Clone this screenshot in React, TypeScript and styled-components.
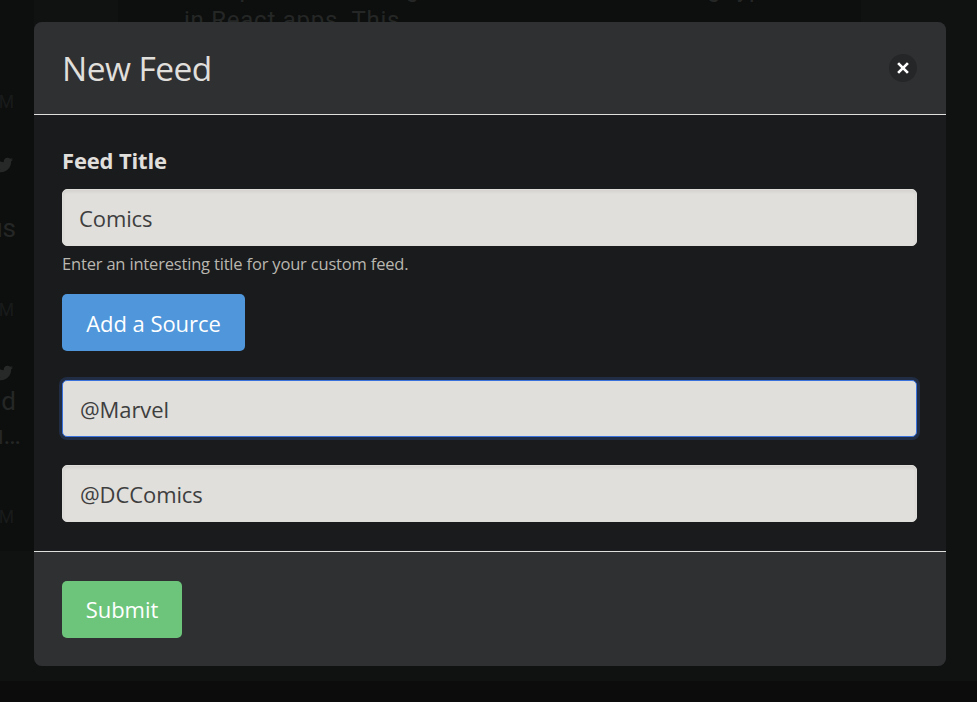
import React from 'react';
import styled, { createGlobalStyle } from 'styled-components';

const GlobalStyle = createGlobalStyle`
  *, *::before, *::after { box-sizing: border-box; }
  html, body { margin: 0; height: 100%; overflow: hidden; background: #101211; }
  body { font-family: "Open Sans", "Noto Sans", sans-serif; }
`;

const Page = styled.div`
  position: relative;
  width: 977px;
  height: 702px;
  overflow: hidden;
  display: flex;
  flex-direction: column;
  background: #101211;
  color: #252726;
  font-family: Roboto, sans-serif;
`;

const Columns = styled.div`
  flex: 1;
  min-height: 0;
  display: flex;
  align-items: flex-start;
`;

const Sidebar = styled.aside`
  width: 34px;
  height: 551px;
  padding-top: 93px;
  background: #0d0f0e;
  display: flex;
  flex-direction: column;
`;

const Tweet = styled.article<{ $height: number }>`
  height: ${(p) => p.$height}px;
  flex: none;
`;

const TweetTime = styled.div`
  width: 14px;
  height: 18px;
  display: flex;
  justify-content: flex-end;
  font-size: 17.5px;
  line-height: 18px;
  color: #191b1b;
`;

const BirdIcon = styled.svg`
  display: block;
  width: 18px;
  height: 18px;
  margin: 45px 0 0 -5px;
  fill: #272929;
`;

const TweetText = styled.div<{ $gap: number; $right: number }>`
  margin-top: ${(p) => p.$gap}px;
  width: ${(p) => p.$right}px;
  height: 30px;
  display: flex;
  justify-content: flex-end;
  font-size: 26px;
  line-height: 30px;
  white-space: nowrap;
`;

const Article = styled.main`
  margin-left: 84px;
  width: 743px;
  height: 660px;
  background: #0d0f0e;
  padding-left: 66px;
`;

const ArticleText = styled.p`
  margin: -26px 0 0;
  font-size: 24px;
  line-height: 31px;
  letter-spacing: 0.75px;
  white-space: nowrap;
`;

const PageFooter = styled.footer`
  height: 21px;
  background: #0c0c0c;
`;

const Modal = styled.form`
  position: absolute;
  left: 34px;
  top: 22px;
  width: 912px;
  height: 644px;
  display: flex;
  flex-direction: column;
  border-radius: 8px;
  overflow: hidden;
  background: #1a1b1d;
  color: #e0dfdb;
  font-family: "Open Sans", "Noto Sans", sans-serif;
`;

const ModalHeader = styled.header`
  height: 93px;
  flex: none;
  padding: 0 29px 1px 28px;
  display: flex;
  align-items: center;
  justify-content: space-between;
  background: #2f3032;
  border-bottom: 1px solid #dfdfdd;
`;

const Title = styled.h1`
  margin: 1px 0 0;
  font-size: 33.5px;
  line-height: 40px;
  font-weight: 400;
  letter-spacing: -0.55px;
`;

const CloseButton = styled.button`
  width: 28px;
  height: 28px;
  padding: 0;
  border: 0;
  border-radius: 50%;
  background: #252628;
  display: grid;
  place-items: center;
`;

const ModalBody = styled.section`
  flex: 1;
  padding: 28px 29px 0 28px;
  display: flex;
  flex-direction: column;
  align-items: flex-start;
`;

const Label = styled.label`
  height: 34px;
  margin-bottom: 12px;
  font-size: 22px;
  line-height: 34px;
  font-weight: 700;
  letter-spacing: -0.15px;
`;

const Input = styled.input<{ $active?: boolean; $gap?: number; $inset?: number }>`
  width: 100%;
  height: 57px;
  flex: none;
  margin: ${(p) => p.$gap ?? 0}px 0 0;
  padding: 1px 16px 0 ${(p) => p.$inset ?? 16}px;
  border: 1px solid ${(p) => (p.$active ? '#3971dc' : '#dfdedb')};
  border-radius: 5px;
  outline: none;
  background: #e0dfdb;
  color: #3e3e3f;
  box-shadow: ${(p) => (p.$active ? '0 0 0 3px #202d45' : 'inset 0 2px 3px rgba(10, 10, 10, 0.06)')};
  font: 400 22px "Open Sans", "Noto Sans", sans-serif;
  letter-spacing: -0.1px;
`;

const Help = styled.p`
  height: 26px;
  margin: 5px 0 17px;
  font-size: 16.5px;
  line-height: 26px;
  color: #b9b7b0;
  letter-spacing: -0.18px;
  white-space: nowrap;
`;

const Button = styled.button<{ $color: string; $width: number }>`
  width: ${(p) => p.$width}px;
  height: 57px;
  flex: none;
  padding: 0 0 1px;
  border: 0;
  border-radius: 5px;
  background: ${(p) => p.$color};
  color: #fff;
  font: 400 22px/30px "Open Sans", "Noto Sans", sans-serif;
  letter-spacing: -0.05px;
  white-space: nowrap;
`;

const SourceButton = styled(Button)`
  padding: 1px 0 0;
`;

const ModalFooter = styled.footer`
  height: 115px;
  flex: none;
  display: flex;
  align-items: flex-start;
  padding: 29px 28px 0;
  background: #2f3032;
  border-top: 1px solid #dfdfdd;
`;

const Bird = () => (
  <BirdIcon viewBox="0 0 512 512">
    <path d="M459.37 151.716c.325 4.548.325 9.097.325 13.645 0 138.72-105.583 298.558-298.558 298.558-59.452 0-114.68-17.219-161.137-47.106 8.447.974 16.568 1.299 25.34 1.299 49.055 0 94.213-16.568 130.274-44.832-46.132-.975-84.792-31.188-98.112-72.772 6.498.974 12.995 1.624 19.818 1.624 9.421 0 18.843-1.3 27.614-3.573-48.081-9.747-84.143-51.98-84.143-102.985v-1.299c13.969 7.797 30.214 12.67 47.431 13.319-28.264-18.843-46.781-51.005-46.781-87.391 0-19.492 5.197-37.36 14.294-52.954 51.655 63.675 129.3 105.258 216.365 109.807-1.624-7.797-2.599-15.918-2.599-24.04 0-57.828 46.782-104.934 104.934-104.934 30.213 0 57.502 12.67 76.67 33.137 23.715-4.548 46.456-13.32 66.599-25.34-7.798 24.366-24.366 44.833-46.132 57.827 21.117-2.273 41.584-8.122 60.426-16.243-14.292 20.791-32.161 39.308-52.628 54.253z" />
  </BirdIcon>
);

const tweets = [
  { height: 208, lines: [{ text: 'us', gap: 39, right: 16 }] },
  {
    height: 207,
    lines: [
      { text: 'd', gap: 4, right: 16 },
      { text: 'u…', gap: 4, right: 21 },
    ],
  },
];

export default function App() {
  return (
    <>
      <GlobalStyle />
      <Page>
        <Columns>
          <Sidebar>
            {tweets.map((tweet, i) => (
              <Tweet key={i} $height={tweet.height}>
                <TweetTime>M</TweetTime>
                <Bird />
                {tweet.lines.map((line) => (
                  <TweetText key={line.text} $gap={line.gap} $right={line.right}>
                    {line.text}
                  </TweetText>
                ))}
              </Tweet>
            ))}
            <Tweet $height={36}>
              <TweetTime>M</TweetTime>
            </Tweet>
          </Sidebar>
          <Article>
            <ArticleText>
              This post is on using hooks and context testing types
              <br />
              in React apps. This
            </ArticleText>
          </Article>
        </Columns>
        <PageFooter />
        <Modal onSubmit={(e) => e.preventDefault()}>
          <ModalHeader>
            <Title>New Feed</Title>
            <CloseButton type="button" aria-label="Close">
              <svg width="12" height="12" viewBox="0 0 12 12" fill="none" stroke="#fff" strokeWidth="2.7">
                <path d="M1.1 1.1 10.9 10.9M10.9 1.1 1.1 10.9" />
              </svg>
            </CloseButton>
          </ModalHeader>
          <ModalBody>
            <Label htmlFor="feed-title">Feed Title</Label>
            <Input id="feed-title" defaultValue="Comics" />
            <Help>Enter an interesting title for your custom feed.</Help>
            <SourceButton type="button" $color="#4f96da" $width={183}>Add a Source</SourceButton>
            <Input defaultValue="@Marvel" $active $gap={29} $inset={17} />
            <Input defaultValue="@DCComics" $gap={28} $inset={17} />
          </ModalBody>
          <ModalFooter>
            <Button type="submit" $color="#6dc57b" $width={120}>Submit</Button>
          </ModalFooter>
        </Modal>
      </Page>
    </>
  );
}
